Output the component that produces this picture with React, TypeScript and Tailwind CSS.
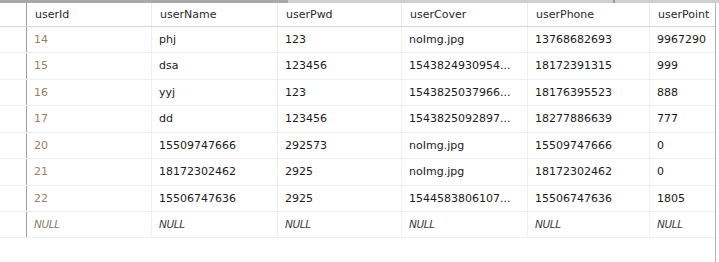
import React from 'react'

const cols = [
  { key: 'userId', w: 'w-[125px]' },
  { key: 'userName', w: 'w-[126px]' },
  { key: 'userPwd', w: 'w-[124px]' },
  { key: 'userCover', w: 'w-[126px]' },
  { key: 'userPhone', w: 'w-[122px]' },
  { key: 'userPoint', w: 'w-[63px]' },
]

const rows: (string | null)[][] = [
  ['14', 'phj', '123', 'noImg.jpg', '13768682693', '9967290'],
  ['15', 'dsa', '123456', '1543824930954...', '18172391315', '999'],
  ['16', 'yyj', '123', '1543825037966...', '18176395523', '888'],
  ['17', 'dd', '123456', '1543825092897...', '18277886639', '777'],
  ['20', '15509747666', '292573', 'noImg.jpg', '15509747666', '0'],
  ['21', '18172302462', '2925', 'noImg.jpg', '18172302462', '0'],
  ['22', '15506747636', '2925', '1544583806107...', '15506747636', '1805'],
  [null, null, null, null, null, null],
]

// alternating heights so the lines land where the grid draws them
const heights = ['h-[26px]', 'h-[27px]', 'h-[26px]', 'h-[27px]', 'h-[26px]', 'h-[27px]', 'h-[26px]', 'h-[26px]']

export default function App() {
  return (
    <div className="w-[719px] h-[262px] bg-white flex flex-col overflow-hidden font-['DejaVu_Sans',sans-serif] text-[11px]">
      {/* strip left over from the pane above */}
      <div className="h-[3px] flex shrink-0">
        <div className="w-[288px] bg-[#a9a9a9]" />
        <div className="w-[325px] bg-[#cfcfcf]" />
        <div className="w-[2px] bg-[#9a9a9a]" />
        <div className="flex-1 bg-[#cfcfcf]" />
      </div>

      <div className="flex flex-1 min-h-0">
        <div className="w-[715px] flex flex-col">
          {/* header */}
          <div className="flex h-[24px] border-b border-[#d5d5d5] shrink-0">
            <div className="w-[27px] border-r border-[#a0a0a0]" />
            {cols.map(c => (
              <div
                key={c.key}
                className={`${c.w} shrink-0 border-r border-[#ececec] last:border-r-0 pl-[8px] pt-[1px] flex items-center overflow-hidden whitespace-nowrap text-[#2a2a2a]`}
              >
                {c.key}
              </div>
            ))}
          </div>

          {rows.map((r, i) => (
            <div key={i} className={`flex ${heights[i]} border-b border-[#f0f0f0] shrink-0`}>
              <div className="w-[27px] border-r border-[#a0a0a0]" />
              {cols.map((c, j) => (
                <div
                  key={c.key}
                  className={`${c.w} shrink-0 border-r border-[#f0f0f0] last:border-r-0 pl-[7px] pt-[1px] flex items-center overflow-hidden whitespace-nowrap ${
                    r[j] === null
                      ? j === 0
                        ? 'italic text-[10.5px] tracking-[-0.4px] text-[#8a7a6a]'
                        : 'italic text-[10.5px] tracking-[-0.4px] text-[#3a3a3a]'
                      : j === 0
                        ? 'text-[#9a8062]'
                        : 'text-[#1a1a1a]'
                  }`}
                >
                  {r[j] ?? 'NULL'}
                </div>
              ))}
            </div>
          ))}
        </div>
        <div className="w-[1px] bg-[#b4b4b4]" />
        <div className="flex-1 bg-white" />
      </div>
    </div>
  )
}
